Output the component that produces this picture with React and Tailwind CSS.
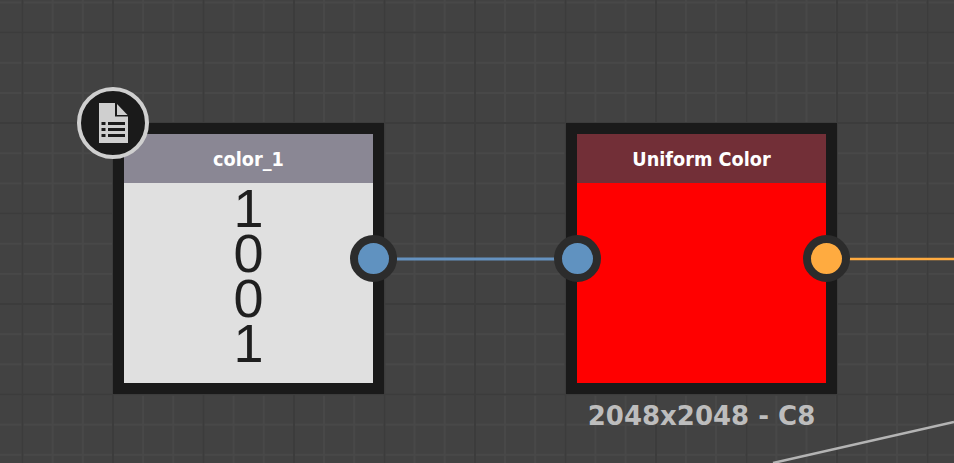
const GRID =
  'bg-[#424242] bg-[linear-gradient(to_right,#3c3c3c_2px,transparent_2px),linear-gradient(to_bottom,#3c3c3c_2px,transparent_2px),linear-gradient(to_right,#484848_2px,transparent_2px),linear-gradient(to_bottom,#484848_2px,transparent_2px)] bg-[size:90.5px_90.5px,90.5px_90.5px,30.17px_30.17px,30.17px_30.17px] bg-[position:21.5px_31.5px,21.5px_31.5px,21.5px_1.5px,21.5px_1.5px]'

function Port({ color, className }) {
  return (
    <div
      className={`absolute top-[101px] w-[47px] h-[47px] rounded-full border-[8.5px] border-[#2c2c2c] ${color} ${className}`}
    />
  )
}

function Node({ title, headerClass, bodyClass, className, ports, children }) {
  return (
    <div className={`absolute top-[123px] w-[271px] flex flex-col items-center gap-[6px] ${className}`}>
      <div className="relative w-full h-[271px] border-[11px] border-[#1a1a1a] flex flex-col">
        <div
          className={`h-[49px] shrink-0 flex items-center justify-center pt-[3px] text-white text-[19.7px] font-bold font-['DejaVu_Sans_Condensed','DejaVu_Sans',sans-serif] ${headerClass}`}
        >
          {title}
        </div>
        <div className={`flex-1 ${bodyClass}`}>{children}</div>
        {ports}
      </div>
    </div>
  )
}

function FileListIcon() {
  return (
    <svg width="29" height="40" viewBox="0 0 29 40" fill="#cfcfcf">
      <path d="M18 1L28.5 12H18Z" />
      <path
        fillRule="evenodd"
        d="M0 0H16V13.5H29V40H0ZM2.5 19V22H6.5V19ZM9 19V22H26V19ZM2.5 25V28H6.5V25ZM9 25V28H26V25ZM2.5 31V34H6.5V31ZM9 31V34H26V31Z"
      />
    </svg>
  )
}

export default function App() {
  return (
    <div className={`relative w-[954px] h-[463px] overflow-hidden ${GRID}`}>
      <svg className="absolute inset-0" width="954" height="463" fill="none">
        <path d="M397 259H555" stroke="#6592c0" strokeWidth="3" />
        <path d="M849 259H954" stroke="#ffab40" strokeWidth="2.5" />
        <path d="M773 463L954 422" stroke="#b4b4b4" strokeWidth="2.5" />
      </svg>

      <Node
        title="color_1"
        className="left-[113px]"
        headerClass="bg-[#8a8794]"
        bodyClass="bg-[#e0e0e0] flex flex-col items-center text-[54px] leading-[45px] text-[#1f1f1f] font-['Liberation_Sans',sans-serif] pt-[3px]"
        ports={<Port color="bg-[#6092c0]" className="right-[-24px]" />}
      >
        <span>1</span>
        <span>0</span>
        <span>0</span>
        <span>1</span>
      </Node>

      <Node
        title="Uniform Color"
        className="left-[566px]"
        headerClass="bg-[#722f37]"
        bodyClass="bg-[#ff0000]"
        ports={
          <>
            <Port color="bg-[#6092c0]" className="left-[-23.5px]" />
            <Port color="bg-[#ffab40]" className="right-[-23.5px]" />
          </>
        }
      />

      <div className="absolute left-[566px] top-[401px] w-[271px] flex justify-center text-[#bdbdbd] text-[26px] leading-[30px] font-bold font-['DejaVu_Sans',sans-serif]">
        <span className="whitespace-nowrap">2048x2048 - C8</span>
      </div>

      <div className="absolute left-[77px] top-[87px] w-[72px] h-[72px] rounded-full bg-[#1a1a1a] border-[4.5px] border-[#cfcfcf] flex items-center justify-center">
        <FileListIcon />
      </div>
    </div>
  )
}
